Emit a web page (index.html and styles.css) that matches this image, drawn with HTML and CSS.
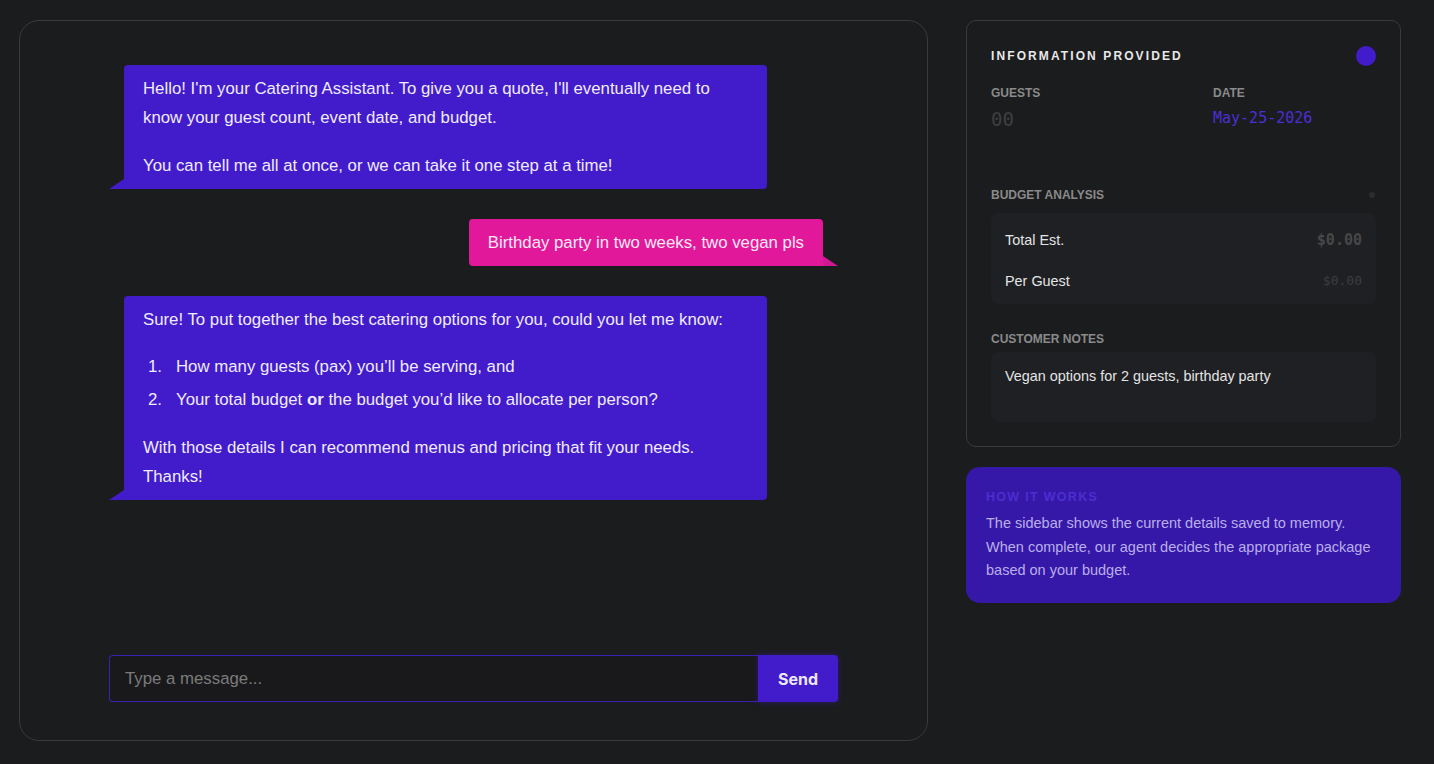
FILE: index.html
```html
<!DOCTYPE html>
<html lang="en">
<head>
    <meta charset="UTF-8">
    <meta name="viewport" content="width=device-width, initial-scale=1.0">
    <title>Catering Assistant</title>
    <link rel="stylesheet" href="styles.css">
</head>
<body>
    <div class="app">
        <main class="chat">
            <div class="messages">
                <div class="msg bot">
                    <p>Hello! I'm your Catering Assistant. To give you a quote, I'll eventually need to know your guest count, event date, and budget.</p>
                    <p>You can tell me all at once, or we can take it one step at a time!</p>
                </div>
                <div class="msg user">
                    <p>Birthday party in two weeks, two vegan pls</p>
                </div>
                <div class="msg bot">
                    <p>Sure! To put together the best catering options for you, could you let me know:</p>
                    <ol>
                        <li>How many guests (pax) you’ll be serving, and</li>
                        <li>Your total budget <strong>or</strong> the budget you’d like to allocate per person?</li>
                    </ol>
                    <p>With those details I can recommend menus and pricing that fit your needs. Thanks!</p>
                </div>
            </div>
            <form class="composer" onsubmit="return false;">
                <input type="text" placeholder="Type a message..." autofocus>
                <button type="submit">Send</button>
            </form>
        </main>

        <aside class="sidebar">
            <section class="card info">
                <div class="card-head">
                    <h3>Information Provided</h3>
                    <span class="status-dot"></span>
                </div>
                <div class="facts">
                    <div>
                        <div class="label">Guests</div>
                        <div class="value empty">00</div>
                    </div>
                    <div>
                        <div class="label">Date</div>
                        <div class="value date">May-25-2026</div>
                    </div>
                </div>

                <div class="section-head budget-head">
                    <span class="label">Budget Analysis</span>
                    <span class="mini-dot"></span>
                </div>
                <div class="panel budget">
                    <div class="row">
                        <span>Total Est.</span>
                        <span class="amount total">$0.00</span>
                    </div>
                    <div class="row">
                        <span>Per Guest</span>
                        <span class="amount">$0.00</span>
                    </div>
                </div>

                <div class="section-head notes-head">
                    <span class="label">Customer Notes</span>
                </div>
                <div class="panel notes">Vegan options for 2 guests, birthday party</div>
            </section>

            <section class="card help">
                <h4>How it works</h4>
                <p>The sidebar shows the current details saved to memory. When complete, our agent decides the appropriate package based on your budget.</p>
            </section>
        </aside>
    </div>
</body>
</html>
```

FILE: styles.css
```css
html, body {
    height: 100%;
}
body {
    margin: 0;
    background-color: #1b1c1e;
    color: #e6e6e6;
    font-family: "Liberation Sans", Arial, sans-serif;
}
.app {
    display: grid;
    grid-template-columns: 909px 435px;
    gap: 38px;
    padding: 20px 19px;
    align-items: start;
}

/* chat column */
.chat {
    display: flex;
    flex-direction: column;
    box-sizing: border-box;
    height: 721px;
    padding: 44px 89px 38px;
    border: 1px solid #3a3a3c;
    border-radius: 20px;
}
.messages {
    flex: 1;
    display: flex;
    flex-direction: column;
    gap: 30px;
}
.msg {
    position: relative;
    box-sizing: border-box;
    max-width: 643px;
    padding: 9px 19px;
    font-size: 16.8px;
    line-height: 29px;
    border-radius: 4px;
}
.msg p {
    margin: 0 0 18.5px;
}
.msg p:last-child {
    margin-bottom: 0;
}
.msg ol {
    margin: 0 0 18.5px;
    padding-left: 33px;
}
.msg li::marker {
    content: counter(list-item) ".   ";
}
.msg li + li {
    margin-top: 4px;
}
.msg strong {
    font-weight: bold;
}
.bot {
    align-self: flex-start;
    margin-left: 15px;
    background-color: #421bcb;
    color: #f0ecff;
    border-bottom-left-radius: 0;
}
.bot::after {
    content: "";
    position: absolute;
    left: -15px;
    bottom: 0;
    border-bottom: 10px solid #421bcb;
    border-left: 15px solid transparent;
}
.user {
    align-self: flex-end;
    margin-right: 15px;
    background-color: #e2189a;
    color: #fde8f5;
    border-bottom-right-radius: 0;
}
.user::after {
    content: "";
    position: absolute;
    right: -15px;
    bottom: 0;
    border-bottom: 10px solid #cf1891;
    border-right: 15px solid transparent;
}

.composer {
    display: flex;
    height: 47px;
}
.composer input {
    flex: 1;
    min-width: 0;
    box-sizing: border-box;
    margin: 0;
    padding: 0 15px;
    background-color: #19191b;
    border: 1px solid #3a20b0;
    border-right: none;
    border-radius: 4px 0 0 4px;
    color: #e6e6e6;
    caret-color: #e6e6e6;
    font-family: "Liberation Sans", Arial, sans-serif;
    font-size: 16.8px;
    outline: none;
}
.composer input::placeholder {
    color: #7b7b7b;
}
.composer button {
    width: 80px;
    margin: 0;
    border: none;
    border-radius: 0 4px 4px 0;
    background-color: #421bcb;
    color: #ece8ff;
    font-family: Inter, Roboto, sans-serif;
    font-size: 16px;
    font-weight: 700;
    box-shadow: 0 0 6px rgba(66, 27, 203, 0.45);
    cursor: pointer;
}

/* sidebar */
.sidebar {
    display: flex;
    flex-direction: column;
    gap: 20px;
}
.card {
    box-sizing: border-box;
}
.info {
    padding: 25px 24px 24px;
    border: 1px solid #3a3a3c;
    border-radius: 10px;
    background-color: #1b1c1e;
}
.card-head {
    display: flex;
    justify-content: space-between;
    align-items: center;
    height: 20px;
}
.card-head h3 {
    margin: 0;
    font-size: 12px;
    font-weight: 900;
    letter-spacing: 2.1px;
    text-transform: uppercase;
    color: #e8e8e8;
}
.status-dot {
    width: 20px;
    height: 20px;
    border-radius: 50%;
    background-color: #421bcb;
}
.facts {
    display: grid;
    grid-template-columns: 222px 1fr;
    margin-top: 20px;
}
.label {
    font-size: 12px;
    line-height: 14px;
    font-weight: bold;
    text-transform: uppercase;
    color: #8a8a8a;
}
.value {
    margin-top: 8px;
    font-family: "DejaVu Sans Mono", "Liberation Mono", monospace;
    font-size: 15px;
    line-height: 20px;
}
.value.empty {
    font-size: 19px;
    line-height: 22px;
    color: #3f3f3f;
}
.value.date {
    color: #4b2fd4;
}
.section-head {
    display: flex;
    justify-content: space-between;
    align-items: center;
}
.budget-head {
    margin-top: 58px;
}
.notes-head {
    margin-top: 28px;
}
.mini-dot {
    width: 6px;
    height: 6px;
    margin-right: 1px;
    border-radius: 50%;
    background-color: #2c2c2e;
}
.panel {
    box-sizing: border-box;
    background-color: #1f2023;
    border-radius: 8px;
    font-size: 14.4px;
    color: #e4e4e4;
}
.budget {
    margin-top: 11px;
    padding: 6px 14px 3px;
}
.budget .row {
    display: flex;
    justify-content: space-between;
    align-items: center;
    height: 41px;
}
.amount {
    font-family: "DejaVu Sans Mono", "Liberation Mono", monospace;
    font-size: 13px;
    color: #3d3d3d;
}
.amount.total {
    font-size: 15px;
    font-weight: bold;
    color: #474747;
}
.notes {
    margin-top: 6px;
    min-height: 70px;
    padding: 13px 14px 14px;
    line-height: 22px;
}

.help {
    padding: 22px 20px 20px;
    border-radius: 14px;
    background-color: #3618a9;
}
.help h4 {
    margin: 0 0 7px;
    font-size: 12.5px;
    line-height: 16px;
    font-weight: bold;
    letter-spacing: 1.3px;
    text-transform: uppercase;
    color: #4a2fd0;
}
.help p {
    margin: 0;
    font-size: 14.5px;
    line-height: 23.5px;
    color: #b9afe9;
}
```
